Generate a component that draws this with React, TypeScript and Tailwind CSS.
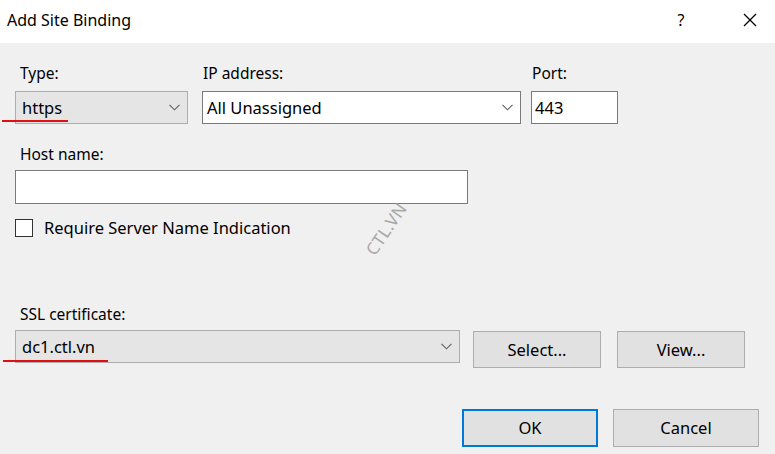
import React from "react";

const Chevron = () => (
  <svg width="11" height="7" viewBox="0 0 11 7" className="shrink-0">
    <polyline points="0.5,0.8 5.5,5.8 10.5,0.8" fill="none" stroke="#606060" strokeWidth="1.1" />
  </svg>
);

export default function App() {
  return (
    <div
      className="relative w-[775px] h-[454px] bg-[#f0f0f0] text-black overflow-hidden"
      style={{ fontFamily: '"Noto Sans", "Open Sans", sans-serif' }}
    >
      {/* Title bar */}
      <div className="h-[43px] bg-white flex items-center justify-between">
        <div className="pl-[7px] text-[16px] leading-[20px] -mt-[4px]">Add Site Binding</div>
        <div className="flex items-center -mt-[4px]">
          <span className="text-[16px] leading-[20px] w-[20px] text-center mr-[52px]">?</span>
          <svg width="14" height="14" viewBox="0 0 14 14" className="mr-[18px]">
            <line x1="1" y1="1" x2="13" y2="13" stroke="#000" strokeWidth="1.2" />
            <line x1="13" y1="1" x2="1" y2="13" stroke="#000" strokeWidth="1.2" />
          </svg>
        </div>
      </div>

      {/* Body */}
      <div className="px-[15px] pt-[20px] text-[15.5px] leading-[20px]">
        {/* Row 1 */}
        <div className="flex">
          <div className="flex flex-col w-[173px]">
            <span className="pl-[5px]">Type:</span>
            <div className="mt-[8px] h-[33px] bg-[#e5e5e5] border border-[#adadad] flex items-center justify-between pl-[6px] pr-[7px] text-[16.5px]">
              <span>https</span>
              <Chevron />
            </div>
          </div>
          <div className="flex flex-col w-[319px] ml-[14px]">
            <span className="pl-[1px]">IP address:</span>
            <div className="mt-[8px] h-[33px] bg-white border border-[#7a7a7a] flex items-center justify-between pl-[4px] pr-[7px] text-[16.5px]">
              <span>All Unassigned</span>
              <Chevron />
            </div>
          </div>
          <div className="flex flex-col w-[87px] ml-[10px]">
            <span className="pl-[1px]">Port:</span>
            <div className="mt-[8px] h-[33px] bg-white border border-[#7a7a7a] flex items-center pl-[3px] text-[16.5px]">
              443
            </div>
          </div>
        </div>

        {/* Host name */}
        <div className="mt-[20px] pl-[5px]">Host name:</div>
        <div className="mt-[6px] w-[453px] h-[34px] bg-white border border-[#7a7a7a]"></div>

        {/* Checkbox */}
        <div className="mt-[14px] flex items-center">
          <div className="w-[18px] h-[18px] bg-white border border-[#333]"></div>
          <span className="ml-[11px] text-[16.5px]">Require Server Name Indication</span>
        </div>

        {/* SSL certificate */}
        <div className="mt-[66px] pl-[5px]">SSL certificate:</div>
        <div className="mt-[6px] flex items-start">
          <div className="w-[445px] h-[33px] bg-[#e5e5e5] border border-[#adadad] flex items-center justify-between pl-[6px] pr-[7px] text-[16.5px]">
            <span>dc1.ctl.vn</span>
            <Chevron />
          </div>
          <button className="ml-[13px] mt-[1px] w-[128px] h-[37px] bg-[#e1e1e1] border border-[#adadad] text-[16.5px]">
            Select...
          </button>
          <button className="ml-[16px] mt-[1px] w-[128px] h-[37px] bg-[#e1e1e1] border border-[#adadad] text-[16.5px]">
            View...
          </button>
        </div>

        {/* OK / Cancel */}
        <div className="mt-[41px] flex justify-end pr-[1px]">
          <button className="w-[136px] h-[38px] bg-[#e1e1e1] border-2 border-[#0078d7] text-[16.5px]">
            OK
          </button>
          <button className="ml-[15px] w-[146px] h-[38px] bg-[#e1e1e1] border border-[#adadad] text-[16.5px]">
            Cancel
          </button>
        </div>
      </div>

      {/* Red underlines */}
      <div className="absolute left-[2px] top-[120px] w-[66px] h-[2px] bg-[#e01010]"></div>
      <div className="absolute left-[3px] top-[360px] w-[105px] h-[2px] bg-[#e01010]"></div>

      {/* Watermark */}
      <div className="absolute left-[357px] top-[219px] text-[17px] leading-[20px] text-[#a8a8a8] -rotate-[56deg] origin-center tracking-[0.5px]">
        CTL.VN
      </div>
    </div>
  );
}
